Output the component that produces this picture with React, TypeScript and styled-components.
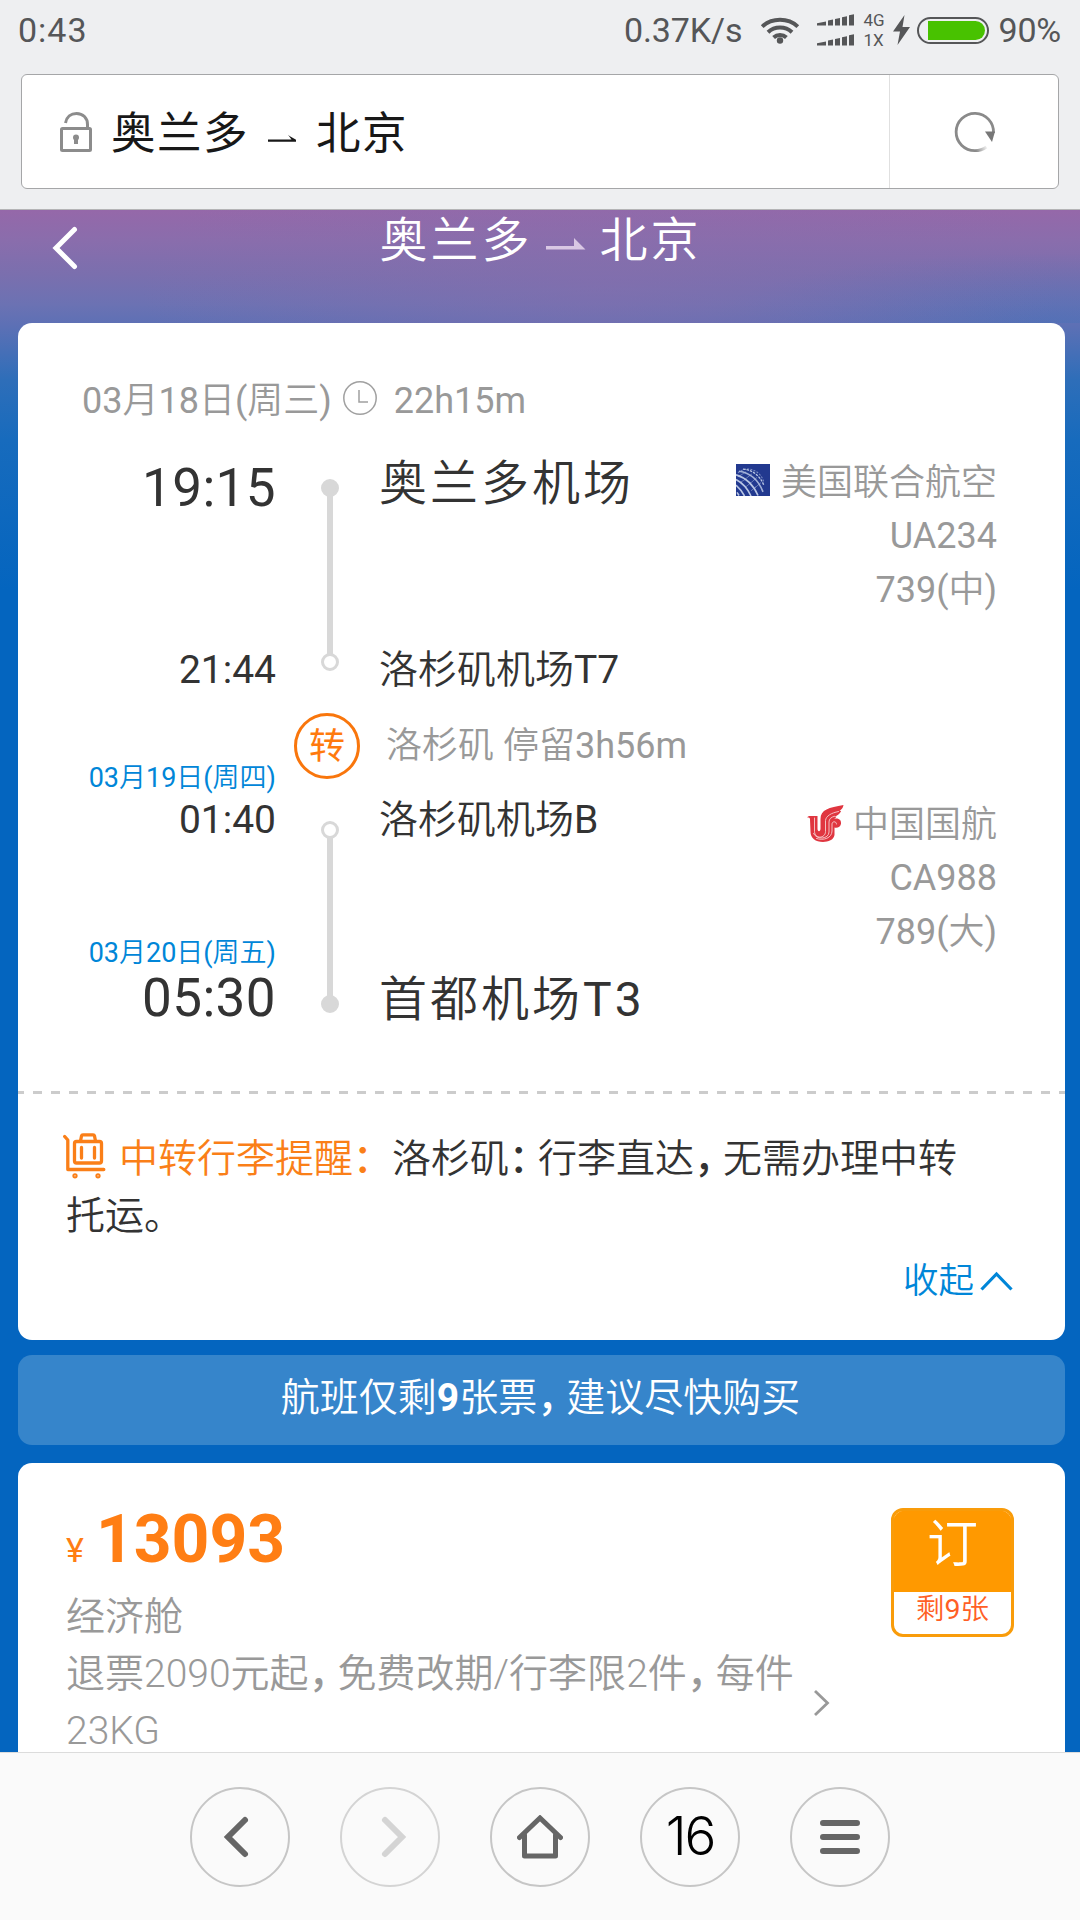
import React from "react";
import styled, { createGlobalStyle } from "styled-components";

const GlobalStyle = createGlobalStyle`
  * { box-sizing: border-box; }
  html, body { margin: 0; padding: 0; }
  body {
    font-family: Roboto, "Noto Sans CJK SC DemiLight", "Noto Sans CJK SC", sans-serif;
    background: #eeeff1;
  }
  svg { display: block; flex: none; }
`;

const Screen = styled.div`
  width: 1080px;
  height: 1920px;
  display: flex;
  flex-direction: column;
  overflow: hidden;
`;

/* ---------- status bar ---------- */

const StatusBar = styled.header`
  height: 74px;
  padding: 0 19px 0 18px;
  display: flex;
  align-items: flex-start;
  justify-content: space-between;
  color: #555658;
`;

const StatusText = styled.span<{ $spacing?: number }>`
  font-size: 34px;
  line-height: 60px;
  letter-spacing: ${(p) => p.$spacing ?? 0}px;
  white-space: nowrap;
`;

const StatusGroup = styled.div`
  display: flex;
  align-items: center;
  height: 60px;
`;

const WifiSlot = styled.span`
  padding: 0 17px 0 18px;
`;

const NetworkLabels = styled.div`
  display: flex;
  flex-direction: column;
  width: 24px;
  margin: 0 6px 0 8px;
  font-size: 17px;
  line-height: 20px;
`;

const Battery = styled.div`
  width: 72px;
  height: 27px;
  margin: 0 9px 0 7px;
  padding: 2px 2px 2px 9px;
  border: 2px solid #555658;
  border-radius: 14px;
`;

const BatteryFill = styled.div`
  height: 19px;
  width: 57px;
  background: #48c200;
  border-radius: 0 10px 10px 0;
`;

/* ---------- address bar ---------- */

const AddressArea = styled.div`
  height: 136px;
  padding: 0 21px;
  border-bottom: 1px solid #b4b4b6;
`;

const AddressBar = styled.div`
  height: 115px;
  display: flex;
  background: #fff;
  border: 1px solid #a5a6a8;
  border-radius: 6px;
`;

const AddressField = styled.div`
  flex: 1;
  display: flex;
  align-items: center;
  padding-left: 38px;
  border-right: 1px solid #e0e0e0;
  color: #181818;
`;

const AddressText = styled.span`
  font-family: Roboto, "Noto Sans CJK SC", sans-serif;
  font-size: 44.5px;
  line-height: 60px;
  letter-spacing: 1.5px;
  padding-top: 4px;
`;

const ReloadCell = styled.div`
  width: 168px;
  display: flex;
  align-items: center;
  justify-content: center;
  padding-left: 2px;
`;

/* ---------- web page ---------- */

const WebPage = styled.main`
  flex: 1;
  min-height: 0;
  overflow: hidden;
  display: flex;
  flex-direction: column;
  padding: 0 15px 0 18px;
  background:
    radial-gradient(ellipse 460px 170px at 600px 75px, rgba(136, 110, 172, 0.55), rgba(136, 110, 172, 0)) 0 0 / 100% 113px no-repeat,
    radial-gradient(ellipse 330px 70px at 1040px 113px, rgba(70, 112, 184, 0.45), rgba(70, 112, 184, 0)) 0 0 / 100% 113px no-repeat,
    linear-gradient(180deg, #9568a9 0px, #8a6dac 30px, #7a6fae 65px, #6b72b3 95px, #5d70b5 115px, #2e6eb9 170px, #176bbd 230px, #0465bf 380px);
`;

const PageHeader = styled.div`
  height: 113px;
  flex: none;
  display: grid;
  grid-template-columns: 200px 1fr 202px;
  color: #fff;
`;

const BackCell = styled.div`
  padding: 15px 0 0 33px;
`;

const PageTitle = styled.h1`
  margin: 0;
  display: flex;
  justify-content: center;
  font-weight: 400;
  font-size: 48px;
  line-height: 62px;
  letter-spacing: 3px;
`;

const Card = styled.section<{ $height: number }>`
  flex: none;
  height: ${(p) => p.$height}px;
  background: #fff;
  border-radius: 14px;
`;

const DateRow = styled.div`
  display: flex;
  align-items: center;
  height: 103px;
  padding: 53px 0 0 64px;
  font-size: 36px;
  line-height: 50px;
  color: #999;
`;

const Itinerary = styled.div`
  height: 638px;
  padding: 27px 68px 0 0;
  display: flex;
`;

const Column = styled.div<{ $width?: number; $align?: string; $left?: number }>`
  display: flex;
  flex-direction: column;
  align-items: ${(p) => p.$align ?? "flex-start"};
  ${(p) => (p.$width ? `width: ${p.$width}px;` : "flex: 1;")}
  margin-left: ${(p) => p.$left ?? 0}px;
`;

const Line = styled.div<{
  $size: number;
  $lh: number;
  $top?: number;
  $color?: string;
  $spacing?: number;
  $indent?: number;
}>`
  font-size: ${(p) => p.$size}px;
  line-height: ${(p) => p.$lh}px;
  margin-top: ${(p) => p.$top ?? 0}px;
  margin-left: ${(p) => p.$indent ?? 0}px;
  color: ${(p) => p.$color ?? "#333"};
  letter-spacing: ${(p) => p.$spacing ?? 0}px;
  white-space: nowrap;
`;

const Rail = styled.div<{ $top: number }>`
  height: 192px;
  margin: ${(p) => p.$top}px 0 0 6px;
  display: flex;
  flex-direction: column;
  align-items: center;
`;

const Stop = styled.i<{ $hollow?: boolean }>`
  width: 18px;
  height: 18px;
  border-radius: 50%;
  border: 3px solid #d8d8d8;
  background: ${(p) => (p.$hollow ? "#fff" : "#d8d8d8")};
`;

const Track = styled.i`
  flex: 1;
  width: 6px;
  margin: -1px 0;
  background: #d8d8d8;
`;

const TransferBadge = styled.div`
  width: 66px;
  height: 66px;
  margin-top: 42px;
  border: 3px solid #f9760c;
  border-radius: 50%;
  color: #ff7a0d;
  font-family: Roboto, "Noto Sans CJK SC", sans-serif;
  font-size: 36px;
  line-height: 62px;
  text-align: center;
`;

const Airline = styled.div<{ $top: number }>`
  margin-top: ${(p) => p.$top}px;
  display: flex;
  flex-direction: column;
  align-items: flex-end;
  font-size: 36px;
  line-height: 54px;
  color: #999;
`;

const AirlineName = styled.div<{ $gap: number }>`
  display: flex;
  align-items: flex-start;
  gap: ${(p) => p.$gap}px;
  height: 54px;
  line-height: 56px;
`;

const Perforation = styled.div`
  height: 3px;
  margin-top: 27px;
  background: repeating-linear-gradient(90deg, #ccc 0 9px, transparent 9px 18px) -3px 0;
`;

const Notice = styled.div`
  padding: 37px 48px 0;
  font-size: 39px;
  line-height: 57px;
  color: #333;
`;

const NoticeLead = styled.span`
  color: #fa7f18;
  margin-right: 10px;
`;

const Punct = styled.span`
  font-family: "Noto Sans CJK SC", sans-serif;
  font-weight: 500;
  line-height: 0;
  letter-spacing: -10px;
`;

const NoticeIcon = styled.span`
  display: inline-block;
  vertical-align: -7px;
  margin: 0 13px 0 -3px;
`;

const Collapse = styled.div`
  display: flex;
  justify-content: flex-end;
  align-items: center;
  gap: 6px;
  margin-top: 11px;
  padding-right: 52px;
  font-size: 35.5px;
  line-height: 50px;
  color: #0086d8;
`;

const SeatsBanner = styled.div`
  flex: none;
  height: 90px;
  margin: 15px 0 18px;
  padding: 0 2px 4px 0;
  display: flex;
  align-items: center;
  justify-content: center;
  background: #3685cb;
  border-radius: 14px;
  color: #fff;
  font-size: 39px;
  line-height: 50px;
  b { font-weight: 700; }
`;

const Fare = styled.div`
  display: flex;
  justify-content: space-between;
  padding: 42px 51px 0 48px;
`;

const FareInfo = styled.div`
  width: 765px;
`;

const Price = styled.div`
  height: 70px;
  font-size: 66px;
  line-height: 70px;
  font-weight: 700;
  color: #ff7e14;
  margin-bottom: 14px;
`;

const Currency = styled.span`
  font-size: 34px;
  line-height: 1;
  font-weight: 400;
  margin-right: 12px;
`;

const FareTerms = styled.div`
  display: flex;
  align-items: center;
  gap: 15px;
`;

const FareText = styled.div`
  width: 732px;
  flex: none;
  font-size: 39px;
  line-height: 57px;
  color: #999;
  white-space: nowrap;
`;

const Thin = styled.span`
  font-weight: 300;
`;

const BookButton = styled.button`
  width: 123px;
  height: 129px;
  margin-top: 3px;
  padding: 0;
  border: 3px solid #f99c0a;
  border-radius: 12px;
  overflow: hidden;
  background: #fff;
  font-family: inherit;
  display: flex;
  flex-direction: column;
`;

const BookTop = styled.span`
  width: 100%;
  height: 81px;
  background: #ff9900;
  color: #fff;
  font-size: 51px;
  line-height: 68px;
  text-align: center;
  box-shadow: 0 0 0 3px #ff9900;
  clip-path: inset(-3px -3px 0 -3px);
`;

const BookLeft = styled.span`
  width: 100%;
  font-size: 28.5px;
  line-height: 36px;
  color: #ff5f26;
  text-align: center;
`;

/* ---------- browser toolbar ---------- */

const Toolbar = styled.nav`
  flex: none;
  height: 168px;
  border-top: 1px solid #dcdcdc;
  background: #fafafa;
  display: flex;
  justify-content: center;
  gap: 50px;
  padding-top: 34px;
`;

const RoundButton = styled.div<{ $disabled?: boolean }>`
  width: 100px;
  height: 100px;
  border: 2px solid ${(p) => (p.$disabled ? "#d4d4d4" : "#c6c6c6")};
  border-radius: 50%;
  display: flex;
  align-items: center;
  justify-content: center;
`;

const TabCount = styled.span`
  font-family: Inter, sans-serif;
  font-weight: 300;
  font-size: 53px;
  line-height: 60px;
  letter-spacing: -2px;
  padding-bottom: 3px;
  color: #000;
`;

/* ---------- icons ---------- */

const WifiIcon = () => (
  <svg width="40" height="28" viewBox="0 0 40 28" fill="none" stroke="#555658" strokeWidth="4">
    <path d="M2.200 10.600C12 1.600 28 1.600 37.800 10.600" />
    <path d="M8 16.200c6.600-6.200 17.400-6.200 24 0" />
    <path d="M13.600 21.500c3.600-3.400 9.200-3.400 12.800 0" />
    <circle cx="20" cy="24.500" r="3.200" fill="#555658" stroke="none" />
  </svg>
);

const SignalIcon = () => (
  <svg width="38" height="32" viewBox="0 0 38 32" fill="#555658">
    {[0, 20].map((y) => (
      <g key={y} transform={`translate(0 ${y})`}>
        <path d="M0 9.200 9 7.500V11.500H0z" />
        <path d="M11 6.500l5-1v6h-5zM18 5l5-1v7.500h-5zM25 3.200l5-1v9.300h-5zM32 1.200l5-1v11.300h-5z" />
      </g>
    ))}
  </svg>
);

const BoltIcon = () => (
  <svg width="17" height="30" viewBox="0 0 17 30" fill="#555658">
    <path d="M11.500 0 0 16.500h7L4.500 30 17 12H9.500z" />
  </svg>
);

const LockSvg = styled.svg`
  margin-right: 19px;
`;

const LockIcon = () => (
  <LockSvg width="32" height="40" viewBox="0 0 32 40" fill="none" stroke="#8c8c8c" strokeWidth="3">
    <rect x="1.500" y="16.500" width="29" height="22" rx="1" />
    <path d="M5.500 11C6.500 5 11 1.500 16.500 1.500c6.500 0 11 4.500 11 11v4" />
    <circle cx="16" cy="25.500" r="3" fill="#8c8c8c" stroke="none" />
    <path d="M16 26v6" strokeWidth="4" />
  </LockSvg>
);

const AddressArrowSvg = styled.svg`
  margin: 13px 20px 0 19px;
`;

const AddressArrow = () => (
  <AddressArrowSvg width="28" height="9" viewBox="0 0 28 9" fill="#181818">
    <path d="M0 5.500h23.500L20 .8c1.500 1.400 5.500 3.700 8 4.900v2H0z" />
  </AddressArrowSvg>
);

const TitleArrowSvg = styled.svg`
  margin: 28px 14px 0 13px;
`;

const TitleArrow = () => (
  <TitleArrowSvg width="40" height="12" viewBox="0 0 40 12" fill="#d9c8e4">
    <path d="M0 8h28V0l11.500 11.500H0z" />
  </TitleArrowSvg>
);

const ReloadIcon = () => (
  <svg width="42" height="42" viewBox="0 0 42 42" fill="none">
    <defs>
      <linearGradient id="fade" x1="22" y1="40" x2="34" y2="35" gradientUnits="userSpaceOnUse">
        <stop offset="0" stopColor="#8a8a8a" />
        <stop offset="1" stopColor="#8a8a8a" stopOpacity="0" />
      </linearGradient>
    </defs>
    <path d="M39.500 22A18.700 18.700 0 1 0 21 39.700" stroke="#8a8a8a" strokeWidth="2.800" />
    <path d="M21 39.700c4.500 0 8-1.200 11.500-3.700" stroke="url(#fade)" strokeWidth="2.800" />
    <path d="M31 20.500h10L38 31z" fill="#777" />
  </svg>
);

const ClockSvg = styled.svg`
  margin: -7px 17px 0 11px;
`;

const ClockIcon = () => (
  <ClockSvg width="34" height="34" viewBox="0 0 34 34" fill="none" stroke="#a0a0a0" strokeWidth="1.500">
    <circle cx="17" cy="17" r="16.200" />
    <path d="M16 9v12h9" />
  </ClockSvg>
);

const UnitedSvg = styled.svg`
  margin-top: 9px;
`;

const UnitedLogo = () => (
  <UnitedSvg width="34" height="32" viewBox="0 0 34 31" preserveAspectRatio="none">
    <rect width="34" height="31" fill="#22398f" />
    <g fill="none" stroke="#b9c6e4" strokeWidth="1.600">
      <path d="M1 27.500l2 3M0 20.500c3.500 3 6 6 8.500 10.500M0 15c7 3.500 11.500 8.500 15 16M0 10.500c10.500 3 17.500 10 22 20" />
      <path d="M3 7c11 1.500 19.500 8.500 24 20" opacity=".85" />
      <path d="M7 5c9 .5 17 6 21 16" strokeWidth="1.300" strokeDasharray="2.500 1" />
      <path d="M2 8.500C9 3 17 4 23 9.500c2.500 2.500 4 5 4.800 8" strokeWidth="1" opacity=".6" strokeDasharray="2 1.300" />
      <path d="M2 12.500l8-5M8 15.500l8-6M14 19l7-6M19 23l6-5M4 18l5-3M10 22l5-4M15 26l5-4" strokeWidth=".9" opacity=".5" />
    </g>
  </UnitedSvg>
);

const AirChinaSvg = styled.svg`
  margin-top: 8px;
`;

const AirChinaLogo = () => (
  <AirChinaSvg width="37" height="37" viewBox="0 0 37 37" fill="none" strokeLinecap="round">
    <path
      d="M0 12.300 2 11h8.500v12.500c0 3.500 3 3.500 3 0V14C13.500 4.500 22 2.500 36.500 0c-.4 3-2 4.500-4 5.700l1.600.3c-1.200 3-3.600 4.500-6.600 5.500l2 .2c-.7 1-1.600 1.600-2.500 2 5-1.200 7.500 1.500 7 5-.5 3-3.300 4.500-6.500 3.800V30c-1 5-6 6.900-11.500 6.900-7.500 0-12.500-3.300-12.500-10.300l-.5-11.800C3.200 13 2 12.300 0 12.300z"
      fill="#e03640"
    />
    <g stroke="#f6cfd0" strokeWidth=".9">
      <path d="M7.500 13v13.500c.3 8 11 7 11 0V15.500c.5-4.500 5.500-7.500 13-9" />
      <path d="M6.500 28.500c3 6.500 15.300 6 15.500-1.500V17c0-3 2.200-5 5.500-5.700" />
      <path d="M9.500 33.500c7 2.500 15.500-.500 15.500-7.500v-7c.2-3 4.500-3 4.500 0" />
    </g>
  </AirChinaSvg>
);

const TrolleyIcon = () => (
  <svg width="43" height="46" viewBox="0 0 43 46" fill="none" stroke="#fa7f18" strokeWidth="3.300" strokeLinecap="round" strokeLinejoin="round">
    <path d="M1.700 3.500 4.800 7v29.500h36" />
    <rect x="11.500" y="8.500" width="27" height="21.500" rx="2" />
    <path d="M17.500 8l1-5c.2-.8.700-1.200 1.400-1.200h10.200c.7 0 1.200.4 1.400 1.200l1 5M18.500 14.500v10.500M31.500 14.500v10.500" />
    <circle cx="12" cy="42.800" r="1" />
    <circle cx="35" cy="42.800" r="1" />
  </svg>
);

type ChevronProps = {
  w: number;
  h: number;
  d: string;
  color: string;
  stroke: number;
  round?: boolean;
};

const Chevron = ({ w, h, d, color, stroke, round }: ChevronProps) => (
  <svg width={w} height={h} viewBox={`0 0 ${w} ${h}`} fill="none" stroke={color} strokeWidth={stroke} strokeLinecap={round ? "round" : "butt"}>
    <path d={d} />
  </svg>
);

const HomeIcon = () => (
  <svg width="46" height="44" viewBox="0 0 46 44" fill="none" stroke="#666" strokeWidth="5" strokeLinecap="round" strokeLinejoin="round">
    <path d="M2.500 22.500 23 3l20.500 19.500" strokeLinejoin="miter" />
    <path d="M7.500 20v21h31V20" />
  </svg>
);

const MenuIcon = () => (
  <svg width="40" height="34" viewBox="0 0 40 34" stroke="#666" strokeWidth="6" strokeLinecap="round">
    <path d="M3 3h34M3 17h34M3 31h34" />
  </svg>
);

export default function App() {
  return (
    <Screen>
      <GlobalStyle />
      <StatusBar>
        <StatusText $spacing={1}>0:43</StatusText>
        <StatusGroup>
          <StatusText $spacing={-0.1}>0.37K/s</StatusText>
          <WifiSlot>
            <WifiIcon />
          </WifiSlot>
          <SignalIcon />
          <NetworkLabels>
            <span>4G</span>
            <span>1X</span>
          </NetworkLabels>
          <BoltIcon />
          <Battery>
            <BatteryFill />
          </Battery>
          <StatusText $spacing={-0.2}>90%</StatusText>
        </StatusGroup>
      </StatusBar>

      <AddressArea>
        <AddressBar>
          <AddressField>
            <LockIcon />
            <AddressText>奥兰多</AddressText>
            <AddressArrow />
            <AddressText>北京</AddressText>
          </AddressField>
          <ReloadCell>
            <ReloadIcon />
          </ReloadCell>
        </AddressBar>
      </AddressArea>

      <WebPage>
        <PageHeader>
          <BackCell>
            <Chevron w={28} h={46} d="M23.500 4.500 5 23l18.500 18.500" color="#fff" stroke={5} round />
          </BackCell>
          <PageTitle>
            <span>奥兰多</span>
            <TitleArrow />
            <span>北京</span>
          </PageTitle>
        </PageHeader>

        <Card $height={1017}>
          <DateRow>
            <span>03月18日(周三)</span>
            <ClockIcon />
            <span>22h15m</span>
          </DateRow>

          <Itinerary>
            <Column $width={258} $align="flex-end">
              <Line $size={53} $lh={60} $top={5} $spacing={0.4}>19:15</Line>
              <Line $size={39} $lh={50} $top={127}>21:44</Line>
              <Line $size={27} $lh={34} $top={66} $color="#0086d8">03月19日(周四)</Line>
              <Line $size={39} $lh={50}>01:40</Line>
              <Line $size={27} $lh={34} $top={91} $color="#0086d8">03月20日(周五)</Line>
              <Line $size={53} $lh={60} $top={-2} $spacing={0.4}>05:30</Line>
            </Column>

            <Column $width={66} $left={18} $align="center">
              <Rail $top={26}>
                <Stop />
                <Track />
                <Stop $hollow />
              </Rail>
              <TransferBadge>转</TransferBadge>
              <Rail $top={42}>
                <Stop $hollow />
                <Track />
                <Stop />
              </Rail>
            </Column>

            <Column $left={19}>
              <Line $size={48} $lh={60} $top={1} $spacing={3}>奥兰多机场</Line>
              <Line $size={39} $lh={50} $top={131}>洛杉矶机场T7</Line>
              <Line $size={36} $lh={50} $top={26} $indent={7} $color="#999">洛杉矶 停留3h56m</Line>
              <Line $size={39} $lh={50} $top={24}>洛杉矶机场B</Line>
              <Line $size={48} $lh={60} $top={125} $spacing={3}>首都机场T3</Line>
            </Column>

            <Column $width={300} $align="flex-end">
              <Airline $top={2}>
                <AirlineName $gap={11}>
                  <UnitedLogo />
                  美国联合航空
                </AirlineName>
                <span>UA234</span>
                <span>739(中)</span>
              </Airline>
              <Airline $top={180}>
                <AirlineName $gap={9}>
                  <AirChinaLogo />
                  中国国航
                </AirlineName>
                <span>CA988</span>
                <span>789(大)</span>
              </Airline>
            </Column>
          </Itinerary>

          <Perforation />

          <Notice>
            <NoticeIcon>
              <TrolleyIcon />
            </NoticeIcon>
            <NoticeLead>
              中转行李提醒<Punct>：</Punct>
            </NoticeLead>
            洛杉矶<Punct>：</Punct>行李直达<Punct>，</Punct>无需办理中转
            <br />
            托运。
          </Notice>
          <Collapse>
            <span>收起</span>
            <Chevron w={33} h={20} d="M1.500 18.500 16.500 3l15 15.500" color="#0086d8" stroke={3.2} />
          </Collapse>
        </Card>

        <SeatsBanner>
          <span>
            航班仅剩<b>9</b>张票<Punct>，</Punct>建议尽快购买
          </span>
        </SeatsBanner>

        <Card $height={360}>
          <Fare>
            <FareInfo>
              <Price>
                <Currency>¥</Currency>
                13093
              </Price>
              <FareText>经济舱</FareText>
              <FareTerms>
                <FareText>
                  退票<Thin>2090</Thin>元起<Punct>，</Punct>免费改期<Thin>/</Thin>行李限<Thin>2</Thin>件<Punct>，</Punct>每件
                  <br />
                  <Thin>23KG</Thin>
                </FareText>
                <Chevron w={18} h={28} d="M2 2l12.500 12L2 26" color="#999" stroke={2.8} />
              </FareTerms>
            </FareInfo>
            <BookButton>
              <BookTop>订</BookTop>
              <BookLeft>剩9张</BookLeft>
            </BookButton>
          </Fare>
        </Card>
      </WebPage>

      <Toolbar>
        <RoundButton>
          <Chevron w={34} h={46} d="M22 6 5 23l17 17" color="#666" stroke={6} round />
        </RoundButton>
        <RoundButton $disabled>
          <Chevron w={34} h={46} d="M12 6l17 17-17 17" color="#d4d4d4" stroke={6} round />
        </RoundButton>
        <RoundButton>
          <HomeIcon />
        </RoundButton>
        <RoundButton>
          <TabCount>16</TabCount>
        </RoundButton>
        <RoundButton>
          <MenuIcon />
        </RoundButton>
      </Toolbar>
    </Screen>
  );
}
